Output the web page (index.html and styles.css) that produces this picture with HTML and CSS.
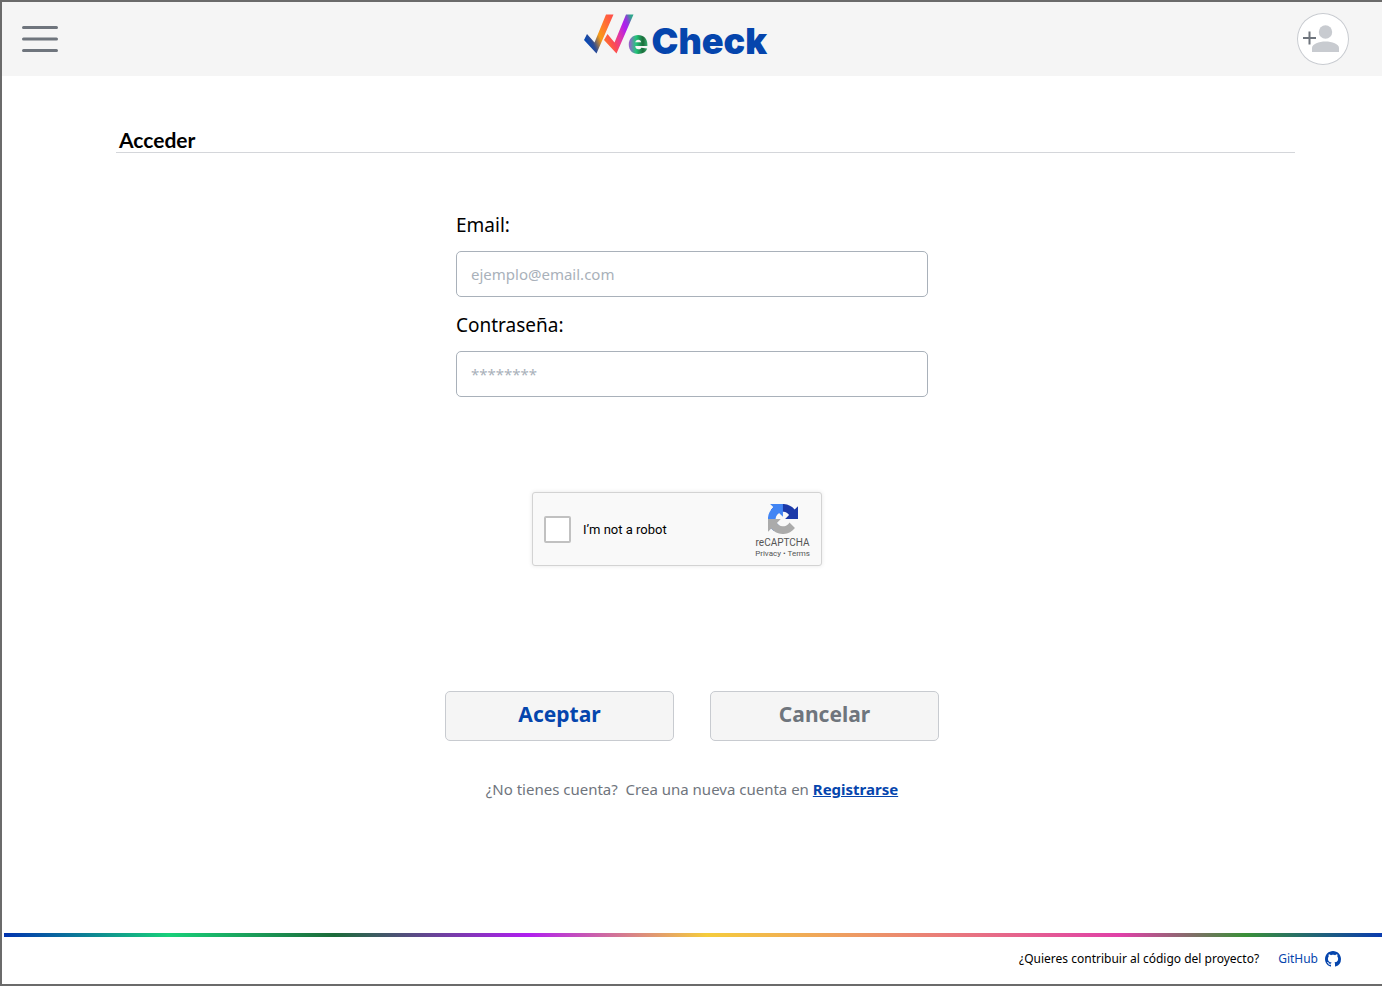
FILE: index.html
```html
<!DOCTYPE html>
<html lang="es">
<head>
<meta charset="utf-8">
<meta name="viewport" content="width=device-width, initial-scale=1">
<title>WeCheck - Acceder</title>
<link rel="stylesheet" href="styles.css">
</head>
<body>
<div class="page">
  <header class="header">
    <button class="menu" type="button" aria-label="Menú">
      <svg width="36" height="28" viewBox="0 0 36 28" fill="none" stroke="#6f757d" stroke-width="3" stroke-linecap="round"><path d="M1.500 2.500h33M1.500 14h33M1.500 25.500h33"/></svg>
    </button>
    <a class="logo" href="#" aria-label="WeCheck">
      <svg class="logo-mark" width="50" height="40" viewBox="0 0 50 40" aria-hidden="true">
        <defs>
          <linearGradient id="g1" gradientUnits="userSpaceOnUse" x1="0" y1="22" x2="30" y2="8">
            <stop offset="0" stop-color="#0848b4"/><stop offset=".15" stop-color="#2d4b94"/><stop offset=".42" stop-color="#f79b16"/><stop offset=".65" stop-color="#ff7b2b"/><stop offset="1" stop-color="#ff5148"/>
          </linearGradient>
          <linearGradient id="g2" gradientUnits="userSpaceOnUse" x1="20" y1="22" x2="50" y2="10">
            <stop offset="0" stop-color="#ff6a33"/><stop offset=".2" stop-color="#fb4a55"/><stop offset=".42" stop-color="#e23aa0"/><stop offset=".7" stop-color="#b11df0"/><stop offset=".84" stop-color="#9338dc"/><stop offset="1" stop-color="#2fa68c"/>
          </linearGradient>
        </defs>
        <path fill="url(#g1)" d="M0 26 3 20 10.500 28.500 22 .5h7.500L12.500 39.500Z"/>
        <path fill="url(#g2)" d="M20 26 23.500 20 30.500 28.500 42 .5h7.500L32.500 39.500Z"/>
      </svg>
      <span class="logo-e">e</span>
      <span class="logo-name">Check</span>
    </a>
    <button class="account" type="button" aria-label="Cuenta">
      <svg width="52" height="52" viewBox="0 0 52 52"><circle cx="28.500" cy="19" r="6.700" fill="#c8cbd0"/><path fill="#c8cbd0" d="M15 39v-4c0-4 7-6.500 13.500-6.500S42 31 42 35v4Z"/><path d="M6 25h13M12.500 18.500v13" stroke="#6f757d" stroke-width="2"/></svg>
    </button>
  </header>

  <main class="main">
    <h1 class="title">Acceder</h1>
    <form class="form">
      <div class="fields">
        <label class="label" for="email">Email:</label>
        <input class="input" id="email" type="email" placeholder="ejemplo@email.com">
        <label class="label" for="password">Contraseña:</label>
        <input class="input" id="password" type="password" placeholder="********">
      </div>
      <div class="captcha">
        <input class="captcha-box" id="robot" type="checkbox">
        <label class="captcha-label" for="robot">I’m not a robot</label>
        <div class="captcha-brand">
          <svg width="30" height="30" viewBox="0 0 64 64" aria-hidden="true">
            <path fill="#1c3aa9" d="M64 31.950c0-.46-.01-.92-.03-1.370V4.560l-7.190 7.190C50.890 4.540 41.930-.06 31.890-.06c-10.450 0-19.730 4.980-25.560 12.690l11.790 11.910c1.160-2.140 2.800-3.970 4.770-5.350 2.060-1.610 4.970-2.920 9-2.920.49 0 .86.060 1.140.160 4.990.39 9.320 3.150 11.870 7.150L36.550 31.930 64 31.950"/>
            <path fill="#4285f4" d="M31.860-.06c-.46 0-.92.010-1.370.030H4.470l7.190 7.190C4.450 13.050-.14 22.020-.14 32.060c0 10.440 4.980 19.720 12.690 25.550l11.910-11.790c-2.140-1.160-3.970-2.800-5.350-4.770-1.610-2.060-2.920-4.970-2.920-9 0-.49.060-.86.160-1.140.39-4.990 3.150-9.320 7.150-11.870l8.350 8.350.01-27.450"/>
            <path fill="#ababab" d="M-.14 32.030c0 .46.010.92.030 1.370v26.020l7.190-7.190c5.890 7.210 14.850 11.800 24.890 11.800 10.450 0 19.730-4.980 25.560-12.690L45.740 39.430c-1.160 2.140-2.800 3.970-4.770 5.350-2.060 1.610-4.970 2.920-9 2.920-.49 0-.86-.060-1.140-.16-4.990-.39-9.320-3.150-11.870-7.150l8.350-8.350-27.450-.01"/>
          </svg>
          <span class="captcha-name">reCAPTCHA</span>
          <span class="captcha-links"><a href="#">Privacy</a> • <a href="#">Terms</a></span>
        </div>
      </div>
      <div class="actions">
        <button class="button button-primary" type="submit">Aceptar</button>
        <button class="button" type="button">Cancelar</button>
      </div>
      <p class="signup">¿No tienes cuenta?&nbsp; Crea una nueva cuenta en <a href="#">Registrarse</a></p>
    </form>
  </main>

  <footer class="footer">
    <span>¿Quieres contribuir al código del proyecto?</span>
    <a class="github" href="#">GitHub
      <svg width="16" height="16" viewBox="0 0 16 16" fill="#0545ad" aria-hidden="true"><path d="M8 0C3.580 0 0 3.580 0 8c0 3.540 2.290 6.530 5.470 7.590.4.070.55-.17.55-.38 0-.19-.01-.82-.01-1.490-2.010.37-2.530-.49-2.690-.94-.09-.23-.48-.94-.82-1.130-.28-.15-.68-.52-.01-.53.63-.01 1.080.58 1.230.82.72 1.210 1.870.87 2.330.66.070-.52.28-.87.51-1.070-1.780-.2-3.640-.89-3.640-3.950 0-.87.31-1.590.82-2.150-.08-.2-.36-1.020.08-2.120 0 0 .67-.21 2.200.82.64-.18 1.320-.27 2-.27s1.360.09 2 .27c1.530-1.040 2.200-.82 2.200-.82.44 1.100.16 1.920.08 2.120.51.56.82 1.270.82 2.150 0 3.070-1.870 3.750-3.650 3.950.29.25.54.73.54 1.480 0 1.070-.01 1.930-.01 2.200 0 .21.150.46.55.38A8.010 8.010 0 0 0 16 8c0-4.420-3.580-8-8-8Z"/></svg>
    </a>
  </footer>
</div>
</body>
</html>
```
FILE: styles.css
```css
* { box-sizing: border-box; }

body {
  margin: 0;
  background: #fff;
  color: #000;
  font-family: "Noto Sans", "Open Sans", sans-serif;
}

button, input { font: inherit; }

.page {
  display: flex;
  flex-direction: column;
  min-height: 100vh;
  border: 2px solid #6b6b6b;
  border-right: 0;
}

.header {
  display: grid;
  grid-template-columns: 1fr auto 1fr;
  align-items: center;
  height: 74px;
  padding: 0 33px 0 20px;
  background: #f5f5f5;
}

.menu {
  justify-self: start;
  display: flex;
  padding: 0;
  border: 0;
  background: none;
}

.account {
  justify-self: end;
  display: flex;
  padding: 0;
  border: 0;
  border-radius: 50%;
  background: #fff;
  box-shadow: inset 0 0 0 1px #c8cbd0;
}

.logo {
  display: flex;
  align-items: baseline;
  margin-right: 20px;
  padding-bottom: 2px;
  font-family: Inter, sans-serif;
  font-weight: 900;
  line-height: 40px;
  text-decoration: none;
}

.logo-e {
  margin-left: -6px;
  font-size: 34px;
  color: transparent;
  background: linear-gradient(90deg, #9a5fd0 5%, #22c77a 40%, #1c6b3a 75%, #3cb878);
  -webkit-background-clip: text;
  background-clip: text;
}

.logo-name {
  margin-left: 3px;
  font-size: 36px;
  color: #0545ad;
}

.main {
  flex: 1;
  display: flex;
  flex-direction: column;
}

.title {
  margin: 52px 87px 0 114px;
  padding: 0 3px;
  border-bottom: 1px solid #d4d6da;
  font: bold 21px/24px Lato, sans-serif;
}

.form {
  display: flex;
  flex-direction: column;
  align-items: center;
  padding: 58px 20px 40px;
}

.fields {
  display: flex;
  flex-direction: column;
  width: 100%;
  max-width: 472px;
}

.label {
  padding-bottom: 12px;
  font-size: 19px;
  line-height: 28px;
}

.input {
  height: 46px;
  margin-bottom: 14px;
  padding: 0 14px;
  border: 1px solid #a9b1ba;
  border-radius: 5px;
  background: #fff;
  font-size: 15px;
}

.input::placeholder { color: #a9b1ba; opacity: 1; }

.captcha {
  display: flex;
  align-items: center;
  width: 290px;
  height: 74px;
  margin: 81px 30px 0 0;
  padding: 0 11px 0 11px;
  border: 1px solid #d3d3d3;
  border-radius: 3px;
  background: #f9f9f9;
  box-shadow: 0 0 4px rgba(0, 0, 0, .1);
  font-family: Roboto, sans-serif;
}

.captcha-box {
  appearance: none;
  width: 27px;
  height: 27px;
  margin: 0 12px 0 0;
  border: 2px solid #c1c1c1;
  border-radius: 2px;
  background: #fff;
}

.captcha-label {
  flex: 1;
  font-size: 13px;
}

.captcha-brand {
  display: flex;
  flex-direction: column;
  align-items: center;
  padding-top: 5px;
  color: #555;
}

.captcha-name {
  margin-top: 3px;
  font-size: 10px;
  line-height: 12px;
}

.captcha-links {
  font-size: 8px;
  line-height: 10px;
}

.captcha-links a { color: inherit; text-decoration: none; }

.actions {
  display: flex;
  gap: 36px;
  margin-top: 125px;
}

.button {
  width: 229px;
  height: 50px;
  padding: 0 0 4px;
  border: 1px solid #c8cbd0;
  border-radius: 5px;
  background: #f5f5f5;
  color: #6f757d;
  font-size: 21px;
  font-weight: 700;
}

.button-primary { color: #0545ad; }

.signup {
  margin: 36px 0 0;
  color: #6f757d;
  font-size: 15px;
  line-height: 24px;
}

.signup a { color: #0545ad; font-weight: 700; }

.footer {
  display: flex;
  align-items: center;
  justify-content: flex-end;
  gap: 19px;
  height: 51px;
  margin-left: 2px;
  padding: 0 41px 4px 0;
  border-top: 4px solid;
  border-image: linear-gradient(90deg, #0233b0, #18d07a 12%, #1c6b3a 24%, #b01ef0 38%, #f5cc3c 51%, #e040a8 81%, #3a9038 90%, #0a3bb0) 1;
  font-size: 12px;
}

.github {
  display: flex;
  align-items: center;
  gap: 7px;
  color: #0545ad;
  text-decoration: none;
}
```
